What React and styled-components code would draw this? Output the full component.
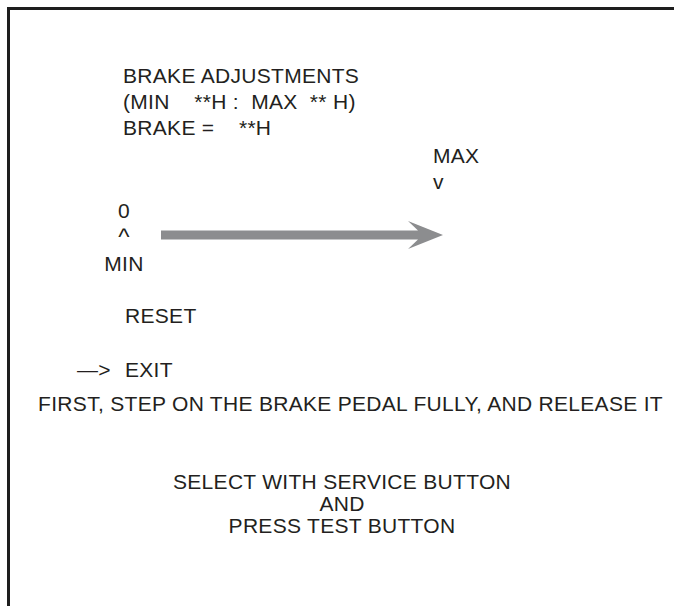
import React from "react";
import styled, { createGlobalStyle } from "styled-components";

const GlobalStyle = createGlobalStyle`
  html, body {
    margin: 0;
    padding: 0;
    background: #fff;
  }
  body {
    font-family: "Liberation Sans", Arial, sans-serif;
    color: #222;
  }
`;

const Frame = styled.div`
  margin: 7px 0 0 7px;
  min-height: calc(100vh - 7px);
  box-sizing: border-box;
  border-top: 3px solid #1e1e1e;
  border-left: 3px solid #1e1e1e;
  padding-top: 53px;
  font-size: 21px;
  letter-spacing: 0.3px;
  line-height: 26px;
  color: #231f20;
`;

const Block = styled.div`
  padding-left: ${(p) => p.indent}px;
  margin-top: ${(p) => p.top || 0}px;
  white-space: pre;
`;

const Line = styled.div``;

const Gauge = styled.div`
  display: flex;
  align-items: flex-start;
  margin-top: 3px;
`;

const Scale = styled.div`
  width: 50px;
  margin-left: 89px;
  display: flex;
  flex-direction: column;
  align-items: center;
`;

const Caret = styled.span`
  font-size: 24px;
`;

const Arrow = styled.svg`
  margin-left: 12px;
  margin-top: 22px;
  flex: none;
`;

const Menu = styled.div`
  margin-top: 26px;
  display: flex;
  flex-direction: column;
  gap: 28px;
`;

const Item = styled.div`
  display: flex;
  padding-left: 67px;
`;

const Pointer = styled.span`
  width: 48px;
  flex: none;
`;

const Notice = styled.div`
  margin-top: 8px;
  text-align: center;
  padding-left: 17px;
`;

const Footer = styled.div`
  margin-top: 54px;
  text-align: center;
  line-height: 22px;
`;

export default function App() {
  return (
    <>
      <GlobalStyle />
      <Frame>
        <Block indent={113}>
          <Line>BRAKE ADJUSTMENTS</Line>
          <Line>{"(MIN    **H :  MAX  ** H)"}</Line>
          <Line>{"BRAKE =    **H"}</Line>
        </Block>
        <Block indent={423} top={2}>
          <Line>MAX</Line>
          <Line>v</Line>
        </Block>
        <Gauge>
          <Scale>
            <Line>0</Line>
            <Line>
              <Caret>^</Caret>
            </Line>
            <Line>MIN</Line>
          </Scale>
          <Arrow width="283" height="30" viewBox="0 0 283 30">
            <polygon
              points="0,10.5 257,10.5 247,1 282,15 247,29 257,19.5 0,19.5"
              fill="#8c8d8f"
            />
          </Arrow>
        </Gauge>
        <Menu>
          <Item>
            <Pointer />
            <span>RESET</span>
          </Item>
          <Item>
            <Pointer>—&gt;</Pointer>
            <span>EXIT</span>
          </Item>
        </Menu>
        <Notice>FIRST, STEP ON THE BRAKE PEDAL FULLY, AND RELEASE IT</Notice>
        <Footer>
          <Line>SELECT WITH SERVICE BUTTON</Line>
          <Line>AND</Line>
          <Line>PRESS TEST BUTTON</Line>
        </Footer>
      </Frame>
    </>
  );
}
